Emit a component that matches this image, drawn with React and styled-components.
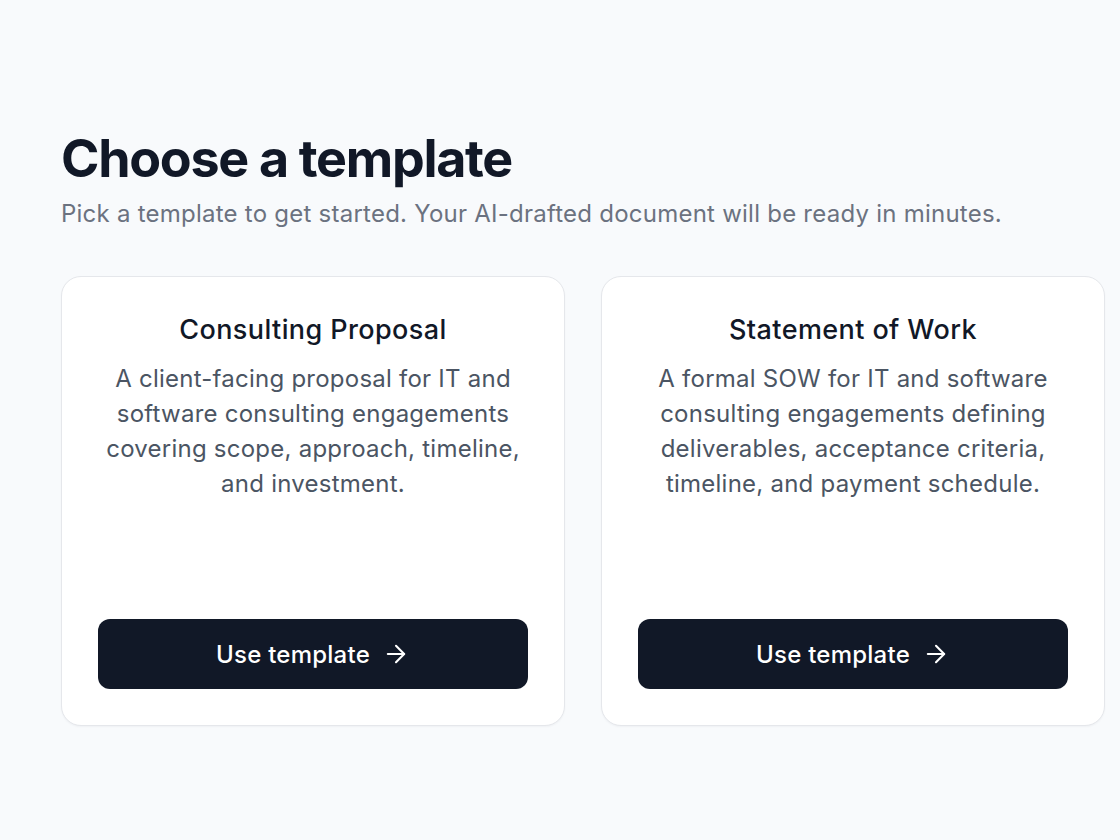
import React from "react";
import styled, { createGlobalStyle } from "styled-components";
import { ArrowRight } from "lucide-react";

const GlobalStyle = createGlobalStyle`
  * { box-sizing: border-box; }
  html, body {
    margin: 0;
    padding: 0;
    background: #f8fafc;
    font-family: "Inter", "Noto Sans", sans-serif;
    -webkit-font-smoothing: antialiased;
  }
`;

const Page = styled.div`
  min-height: 840px;
  padding: 127px 0 0 61px;
`;

const Title = styled.h1`
  margin: 0;
  font-size: 52px;
  line-height: 64px;
  font-weight: 700;
  letter-spacing: -0.025em;
  color: #111827;
`;

const Subtitle = styled.p`
  margin: 7px 0 0;
  font-size: 24px;
  line-height: 32px;
  letter-spacing: 0.01em;
  color: #6b7280;
`;

const Grid = styled.div`
  display: grid;
  grid-template-columns: 504px 504px;
  gap: 36px;
  margin-top: 46px;
`;

const Card = styled.div`
  display: flex;
  flex-direction: column;
  align-items: center;
  height: 450px;
  padding: 35px 36px 36px;
  background: #ffffff;
  border: 1.5px solid #e5e7eb;
  border-radius: 20px;
  box-shadow: 0 1px 2px rgba(15, 23, 42, 0.04);
  text-align: center;
`;

const CardTitle = styled.h2`
  margin: 0;
  font-size: 27px;
  line-height: 36px;
  font-weight: 500;
  letter-spacing: 0.015em;
  color: #111827;
`;

const CardText = styled.p`
  margin: 13px 0 0;
  font-size: 24px;
  line-height: 35px;
  letter-spacing: 0.01em;
  color: #4b5563;
`;

const Button = styled.button`
  margin-top: auto;
  width: 100%;
  height: 70px;
  display: flex;
  align-items: center;
  justify-content: center;
  gap: 12px;
  border: none;
  border-radius: 12px;
  background: #111827;
  color: #ffffff;
  font-family: inherit;
  font-size: 24px;
  font-weight: 500;
  letter-spacing: 0.01em;
  cursor: pointer;
`;

const templates = [
  {
    title: "Consulting Proposal",
    text: "A client-facing proposal for IT and software consulting engagements covering scope, approach, timeline, and investment.",
  },
  {
    title: "Statement of Work",
    text: "A formal SOW for IT and software consulting engagements defining deliverables, acceptance criteria, timeline, and payment schedule.",
  },
];

export default function App() {
  return (
    <>
      <GlobalStyle />
      <Page>
        <Title>Choose a template</Title>
        <Subtitle>
          Pick a template to get started. Your AI-drafted document will be ready in minutes.
        </Subtitle>
        <Grid>
          {templates.map((t) => (
            <Card key={t.title}>
              <CardTitle>{t.title}</CardTitle>
              <CardText>{t.text}</CardText>
              <Button>
                Use template
                <ArrowRight size={28} strokeWidth={1.8} />
              </Button>
            </Card>
          ))}
        </Grid>
      </Page>
    </>
  );
}
